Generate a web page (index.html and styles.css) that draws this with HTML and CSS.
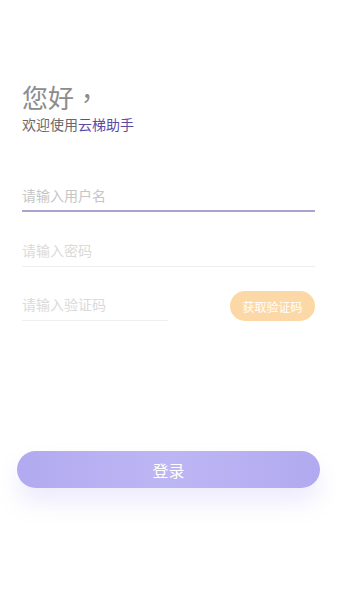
FILE: index.html
```html
<!DOCTYPE html>
<html lang="zh-CN">
<head>
<meta charset="utf-8">
<meta name="viewport" content="width=device-width, initial-scale=1">
<title>登录</title>
<link rel="stylesheet" href="styles.css">
</head>
<body>
<div class="page">
  <header class="hello">
    <h1 class="hello-title">您好<span class="comma" lang="zh-TW">，</span></h1>
    <p class="hello-sub">欢迎使用<span class="brand">云梯助手</span></p>
  </header>
  <form class="form">
    <div class="field field-active"><span class="ph ph-strong">请输入用户名</span></div>
    <div class="field"><span class="ph">请输入密码</span></div>
    <div class="code-row">
      <div class="field field-code"><span class="ph">请输入验证码</span></div>
      <button type="button" class="code-btn">获取验证码</button>
    </div>
  </form>
  <div class="login-wrap">
    <button type="button" class="login-btn">登录</button>
  </div>
</div>
</body>
</html>
```
FILE: styles.css
```css
* { box-sizing: border-box; }
html, body { margin: 0; padding: 0; background: #fff; }
body {
  font-family: "Noto Sans CJK SC", "Noto Sans", sans-serif;
  width: 337px;
  height: 600px;
  overflow: hidden;
}
.page { display: flex; flex-direction: column; }
.hello { padding: 82px 22px 0; }
.hello-title {
  margin: 0;
  font-size: 26px;
  line-height: 30px;
  font-weight: 400;
  color: #8c8c8c;
}
.comma { font-family: "Noto Sans CJK TC", sans-serif; }
.hello-sub {
  margin: 3px 0 0;
  font-size: 14px;
  line-height: 18px;
  color: #6a6a6a;
}
.brand { color: #5a4ca6; }
.form {
  margin: 24px 22px 0;
  display: flex;
  flex-direction: column;
}
.field {
  height: 55px;
  padding: 28px 0 6px;
  border-bottom: 1px solid #eeeeee;
  display: flex;
  align-items: center;
}
.field-active { border-bottom: 2px solid #aaa5d0; }
.ph {
  font-size: 14px;
  line-height: 20px;
  color: #dadada;
}
.ph-strong { color: #c6c6c6; }
.code-row {
  display: flex;
  justify-content: space-between;
  align-items: flex-end;
}
.field-code { width: 146px; height: 54px; padding-bottom: 8px; }
.code-btn {
  width: 85px;
  height: 30px;
  border: none;
  border-radius: 15px;
  background: #fcd8a6;
  color: #fff;
  font-family: inherit;
  font-size: 12px;
  padding: 0;
}
.login-wrap { padding: 130px 17px 0; }
.login-btn {
  width: 100%;
  height: 37px;
  border: none;
  border-radius: 19px;
  background: linear-gradient(90deg, #b2aaf0 0%, #bdb6f4 50%, #b2aaf0 100%);
  color: #fff;
  font-family: inherit;
  font-size: 16px;
  padding: 0;
  box-shadow: 0 14px 22px rgba(175, 165, 240, 0.22);
}
```
